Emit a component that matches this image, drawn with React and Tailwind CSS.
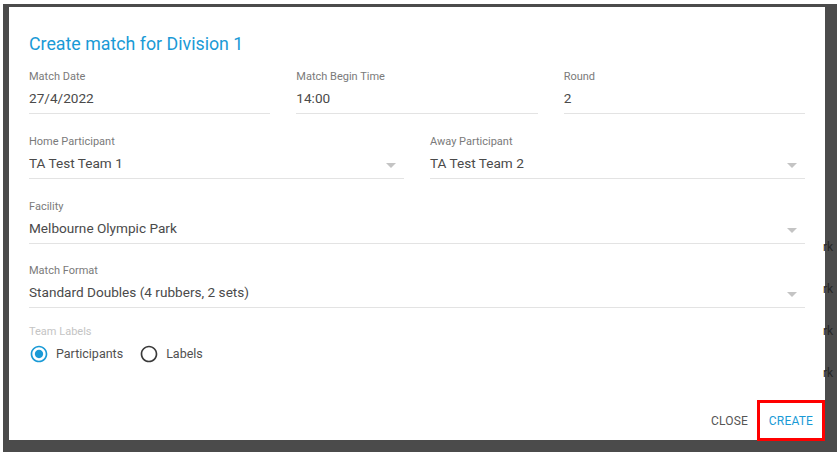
import React from 'react';

const Field = ({ label, value, select, className = '' }) => (
  <div className={`flex flex-col ${className}`}>
    <span className="text-[11px] leading-[14px] text-[#7a7a7a]">{label}</span>
    <div className="mt-[4px] flex items-center justify-between border-b border-[#e3e3e3] pb-[5px]">
      <span className="text-[13.6px] leading-[20px] text-[#4a4a4a]">{value}</span>
      {select && (
        <svg width="10" height="5" viewBox="0 0 10 5" className="mr-[8px] mt-[4px]">
          <path d="M0 0h10L5 5z" fill="#c4c4c4" />
        </svg>
      )}
    </div>
  </div>
);

const Radio = ({ checked, label }) => (
  <div className="flex items-center">
    <svg width="20" height="20" viewBox="0 0 24 24">
      <path
        fill={checked ? '#1a9ad6' : '#3a3a3a'}
        d="M12 2C6.48 2 2 6.48 2 12s4.48 10 10 10 10-4.48 10-10S17.52 2 12 2zm0 18c-4.42 0-8-3.58-8-8s3.58-8 8-8 8 3.58 8 8-3.58 8-8 8z"
      />
      {checked && (
        <path fill="#1a9ad6" d="M12 7c-2.76 0-5 2.24-5 5s2.24 5 5 5 5-2.24 5-5-2.24-5-5-5z" />
      )}
    </svg>
    <span className="ml-[7px] text-[12.5px] leading-[20px] text-[#505050]">{label}</span>
  </div>
);

const App = () => {
  return (
    <div
      className="flex h-[452px] w-[837px] flex-col bg-white pl-[3px] pt-[4px]"
      style={{ fontFamily: 'Roboto, "Liberation Sans", sans-serif' }}
    >
      <div className="flex flex-1 bg-[#4b4b4b] pl-[6px] pt-[3px]">
        <div className="flex h-[433px] w-[816px] flex-col bg-white px-[20px] pt-[25px]">
          {/* Title */}
          <h2 className="text-[17.8px] leading-[24px] text-[#1a9ad6]">Create match for Division 1</h2>

          {/* Row 1 */}
          <div className="mt-[14px] grid grid-cols-3 gap-x-[26px]">
            <Field label="Match Date" value="27/4/2022" />
            <Field label="Match Begin Time" value="14:00" />
            <Field label="Round" value="2" />
          </div>

          {/* Row 2 */}
          <div className="mt-[21px] grid grid-cols-2 gap-x-[26px]">
            <Field label="Home Participant" value="TA Test Team 1" select />
            <Field label="Away Participant" value="TA Test Team 2" select />
          </div>

          <Field className="mt-[21px]" label="Facility" value="Melbourne Olympic Park" select />
          <Field className="mt-[20px]" label="Match Format" value="Standard Doubles (4 rubbers, 2 sets)" select />

          {/* Team labels */}
          <span className="mt-[17px] text-[11px] leading-[14px] text-[#c4c4c4]">Team Labels</span>
          <div className="mt-[5px] flex items-center gap-x-[16px]">
            <Radio checked label="Participants" />
            <Radio label="Labels" />
          </div>

          {/* Actions */}
          <div className="mb-[-1px] mr-[-20px] mt-auto flex items-center justify-end">
            <button className="mr-[9px] text-[12px] leading-[16px] tracking-[0.2px] text-[#555]">CLOSE</button>
            <div className="flex h-[41px] w-[68px] items-center justify-center border-[3px] border-[#f00]">
              <button className="text-[12px] leading-[16px] tracking-[0.2px] text-[#1a9ad6]">CREATE</button>
            </div>
          </div>
        </div>
        <div className="flex flex-col pt-[219px] text-[12px] leading-[42px] text-[#262626]">
          <span className="ml-[-2px]">rk</span>
          <span className="ml-[-2px]">rk</span>
          <span className="ml-[-2px]">rk</span>
          <span className="ml-[-2px]">rk</span>
        </div>
      </div>
    </div>
  );
};

export default App;
